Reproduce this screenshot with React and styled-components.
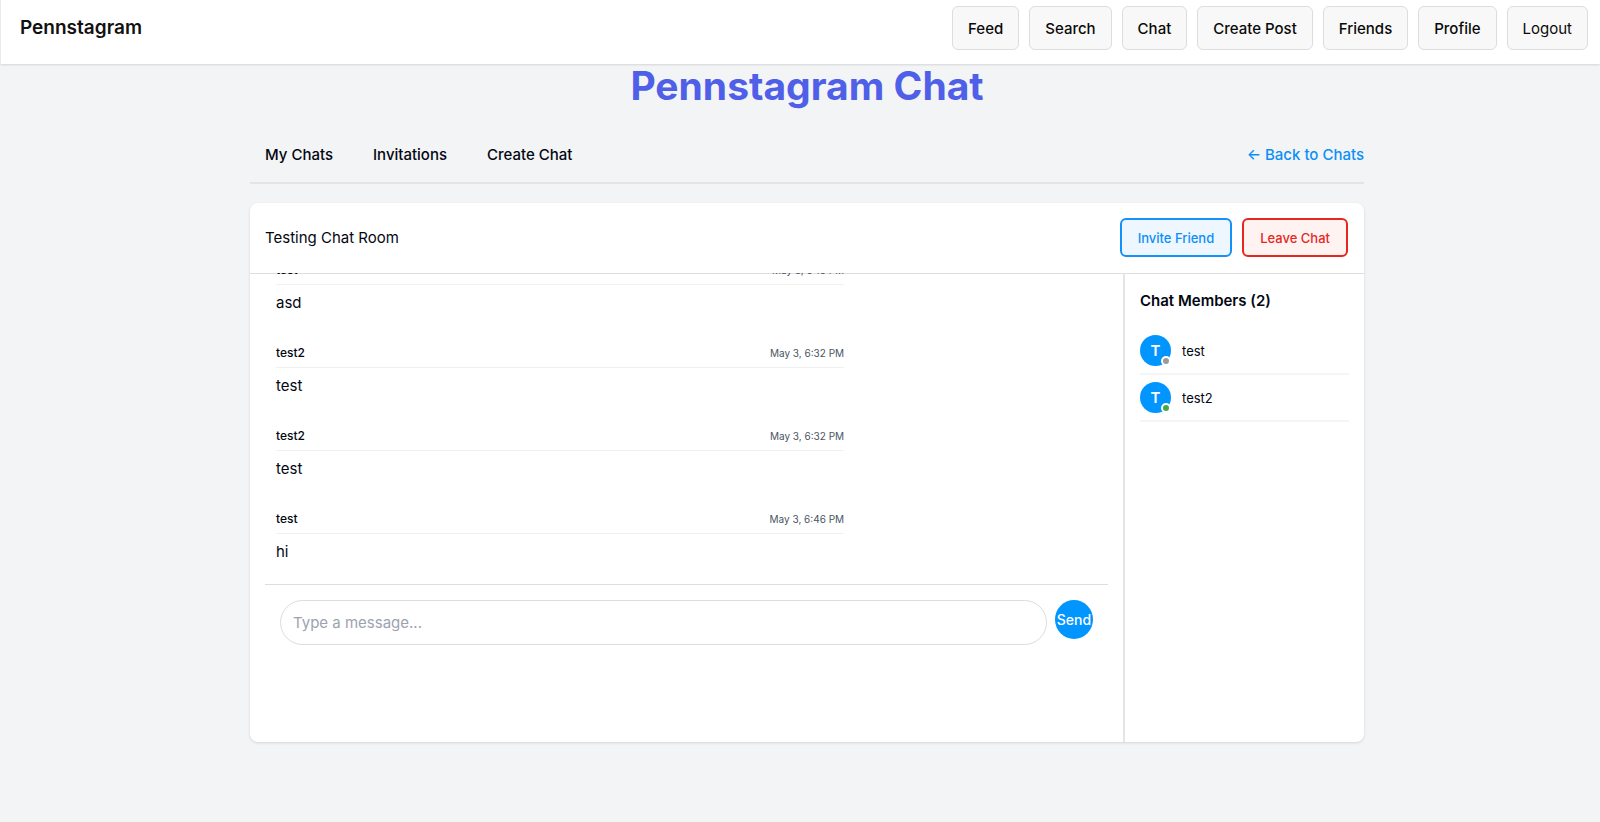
import React from "react";
import styled, { createGlobalStyle } from "styled-components";

const GlobalStyle = createGlobalStyle`
  *, *::before, *::after { box-sizing: border-box; }
  body {
    margin: 0;
    min-height: 100vh;
    background: #f3f4f6;
    color: #030712;
    font: 400 15px/22px Inter, "Liberation Sans", sans-serif;
  }
  button, input { font: inherit; }
  h1, h2, p, ul, ol { margin: 0; padding: 0; }
  ul, ol { list-style: none; }
  a { text-decoration: none; color: inherit; }
`;

const TopBar = styled.header`
  display: flex;
  justify-content: space-between;
  align-items: flex-start;
  height: 64px;
  padding: 6px 12px 0 19px;
  background: #fff;
  border-left: 1px solid #ebebec;
  box-shadow: 0 1px 2px rgba(0, 0, 0, 0.12);
`;

const Brand = styled.a`
  font-size: 19px;
  font-weight: 600;
  line-height: 44px;
  color: #111;
`;

const TopNav = styled.nav`
  display: flex;
  gap: 10px;
`;

const navItem = `
  height: 44px;
  padding: 11px 15px 9px;
  border: 1px solid #ddd;
  border-radius: 6px;
  background: #f8f8f8;
  color: #0a0a0a;
  cursor: pointer;
`;

const NavLink = styled.a`
  ${navItem}
  font-weight: 500;
`;

const NavButton = styled.button`
  ${navItem}
`;

const Main = styled.main`
  max-width: 1128px;
  margin: 0 auto;
  padding-left: 14px;
`;

const PageTitle = styled.h1`
  font-size: 39px;
  font-weight: 700;
  line-height: 44px;
  text-align: center;
  color: #4f5fe8;
`;

const TabBar = styled.nav`
  display: flex;
  gap: 40px;
  margin-top: 20px;
  padding: 16px 0 16px 15px;
  border-bottom: 2px solid #e3e4e6;
  font-weight: 500;
`;

const Tab = styled.a``;

const BackLink = styled.a`
  margin-left: auto;
  color: #0b8ff7;
`;

const Card = styled.section`
  display: flex;
  flex-direction: column;
  min-height: 539px;
  margin-top: 19px;
  border-radius: 8px;
  background: #fff;
  box-shadow: 0 1px 3px rgba(0, 0, 0, 0.13);
`;

const CardHeader = styled.div`
  display: flex;
  align-items: center;
  gap: 10px;
  padding: 15px 16px 16px 15px;
  border-bottom: 1px solid #dedede;
`;

const RoomName = styled.p`
  flex: 1;
`;

const ActionButton = styled.button`
  height: 39px;
  padding: 0 16px;
  border: 2px solid ${(p) => (p.$danger ? "#e5281e" : "#1592f7")};
  border-radius: 6px;
  background: ${(p) => (p.$danger ? "#fff3f2" : "#eef6ff")};
  color: ${(p) => (p.$danger ? "#e5281e" : "#0b8ff7")};
  font-size: 13px;
  font-weight: 500;
  cursor: pointer;
`;

const CardBody = styled.div`
  flex: 1;
  display: flex;
  margin-top: -1px;
`;

const ChatPane = styled.div`
  flex: 1;
  min-width: 0;
  padding: 0 15px;
`;

const MessageList = styled.ol`
  display: flex;
  flex-direction: column-reverse;
  gap: 9px;
  height: 311px;
  padding-bottom: 10px;
  overflow-y: auto;
  scrollbar-width: none;
`;

const Message = styled.li`
  flex: none;
  width: 70%;
  padding: 11px;
`;

const MessageMeta = styled.div`
  display: flex;
  justify-content: space-between;
  padding-bottom: 6px;
  border-bottom: 1px solid #f0f0f0;
  line-height: 16px;
`;

const Author = styled.span`
  font-size: 12px;
  font-weight: 500;
`;

const Time = styled.time`
  font-size: 10px;
  color: #4b5563;
`;

const MessageText = styled.p`
  margin-top: 7px;
`;

const Composer = styled.form`
  display: flex;
  align-items: flex-start;
  gap: 8px;
  padding: 15px;
  border-top: 1px solid #dedede;
`;

const MessageInput = styled.input`
  flex: 1;
  min-width: 0;
  height: 45px;
  padding: 0 12px;
  border: 1px solid #ddd;
  border-radius: 23px;
  background: #fff;
  &::placeholder { color: #9ca3af; }
`;

const SendButton = styled.button`
  display: flex;
  align-items: center;
  justify-content: center;
  width: 38px;
  height: 39px;
  padding: 0;
  border: 0;
  border-radius: 50%;
  background: #0095ff;
  color: #fff;
  font-weight: 500;
  font-size: 14px;
  cursor: pointer;
`;

const Members = styled.aside`
  width: 241px;
  padding: 17px 15px;
  border-left: 2px solid #e5e5e5;
`;

const MembersTitle = styled.h2`
  font-size: 15px;
  font-weight: 600;
  line-height: 22px;
  margin-bottom: 16px;
`;

const Member = styled.li`
  display: flex;
  align-items: center;
  gap: 11px;
  padding: 7px 0;
  border-bottom: 2px solid #f5f5f5;
  font-size: 13px;
`;

const Avatar = styled.span`
  position: relative;
  display: grid;
  place-items: center;
  width: 31px;
  height: 31px;
  border-radius: 50%;
  background: #0095ff;
  color: #fff;
  font-size: 15px;
  font-weight: 600;
`;

const Presence = styled.span`
  position: absolute;
  right: 0;
  bottom: 0;
  width: 10px;
  height: 10px;
  border: 2px solid #fff;
  border-radius: 50%;
  background: ${(p) => (p.$online ? "#43a947" : "#9a9a9a")};
`;

const navLinks = ["Feed", "Search", "Chat", "Create Post", "Friends", "Profile"];
const tabs = ["My Chats", "Invitations", "Create Chat"];
const messages = [
  { id: 4, author: "test", time: "May 3, 6:46 PM", text: "hi" },
  { id: 3, author: "test2", time: "May 3, 6:32 PM", text: "test" },
  { id: 2, author: "test2", time: "May 3, 6:32 PM", text: "test" },
  { id: 1, author: "test", time: "May 3, 6:16 PM", text: "asd" },
];
const members = [
  { name: "test", online: false },
  { name: "test2", online: true },
];

export default function App() {
  return (
    <>
      <GlobalStyle />
      <TopBar>
        <Brand href="#">Pennstagram</Brand>
        <TopNav>
          {navLinks.map((label) => (
            <NavLink key={label} href="#">{label}</NavLink>
          ))}
          <NavButton type="button">Logout</NavButton>
        </TopNav>
      </TopBar>
      <Main>
        <PageTitle>Pennstagram Chat</PageTitle>
        <TabBar>
          {tabs.map((label) => (
            <Tab key={label} href="#">{label}</Tab>
          ))}
          <BackLink href="#">← Back to Chats</BackLink>
        </TabBar>
        <Card>
          <CardHeader>
            <RoomName>Testing Chat Room</RoomName>
            <ActionButton type="button">Invite Friend</ActionButton>
            <ActionButton type="button" $danger>Leave Chat</ActionButton>
          </CardHeader>
          <CardBody>
            <ChatPane>
              <MessageList>
                {messages.map((m) => (
                  <Message key={m.id}>
                    <MessageMeta>
                      <Author>{m.author}</Author>
                      <Time>{m.time}</Time>
                    </MessageMeta>
                    <MessageText>{m.text}</MessageText>
                  </Message>
                ))}
              </MessageList>
              <Composer onSubmit={(e) => e.preventDefault()}>
                <MessageInput type="text" aria-label="Message" placeholder="Type a message..." />
                <SendButton type="submit">Send</SendButton>
              </Composer>
            </ChatPane>
            <Members>
              <MembersTitle>Chat Members (2)</MembersTitle>
              <ul>
                {members.map((m) => (
                  <Member key={m.name}>
                    <Avatar>
                      T
                      <Presence $online={m.online} />
                    </Avatar>
                    {m.name}
                  </Member>
                ))}
              </ul>
            </Members>
          </CardBody>
        </Card>
      </Main>
    </>
  );
}
